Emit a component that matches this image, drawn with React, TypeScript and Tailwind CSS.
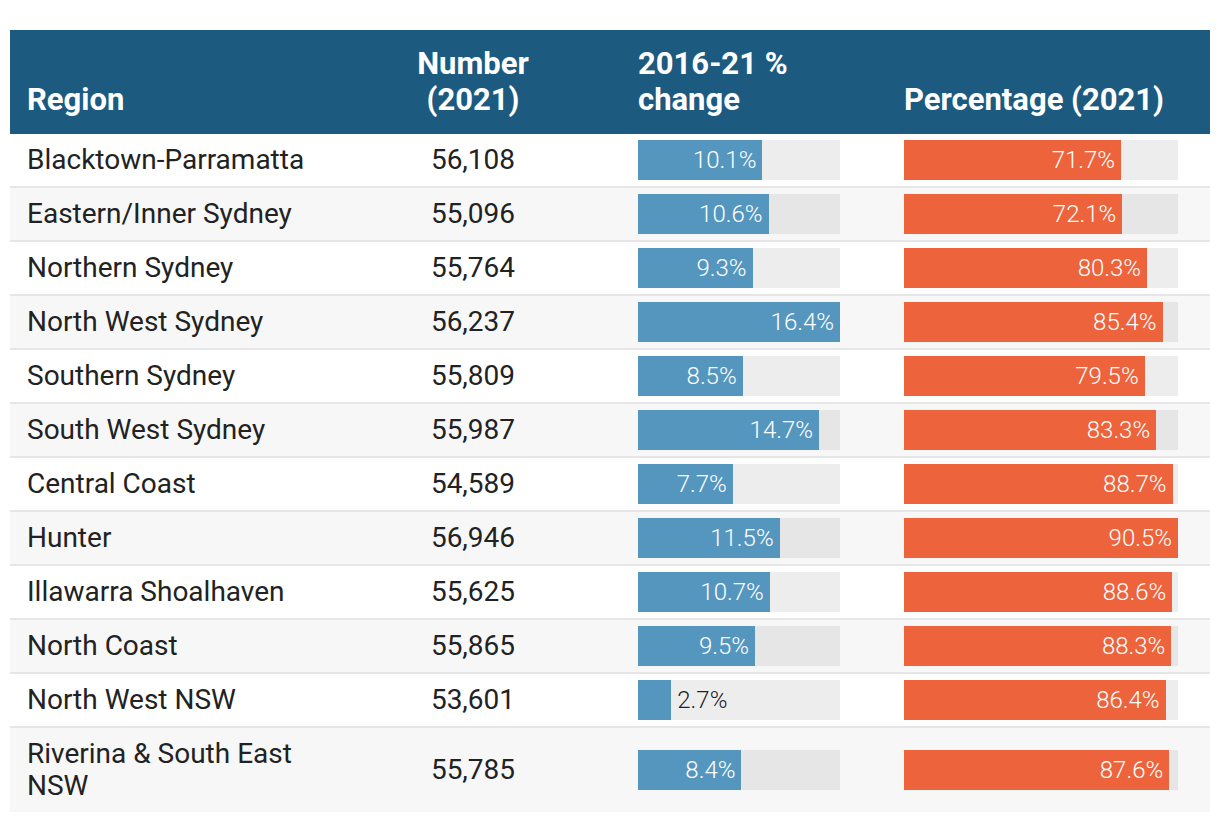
const rows = [
  { region: "Blacktown-Parramatta", num: "56,108", change: 10.1, pct: 71.7 },
  { region: "Eastern/Inner Sydney", num: "55,096", change: 10.6, pct: 72.1 },
  { region: "Northern Sydney", num: "55,764", change: 9.3, pct: 80.3 },
  { region: "North West Sydney", num: "56,237", change: 16.4, pct: 85.4 },
  { region: "Southern Sydney", num: "55,809", change: 8.5, pct: 79.5 },
  { region: "South West Sydney", num: "55,987", change: 14.7, pct: 83.3 },
  { region: "Central Coast", num: "54,589", change: 7.7, pct: 88.7 },
  { region: "Hunter", num: "56,946", change: 11.5, pct: 90.5 },
  { region: "Illawarra Shoalhaven", num: "55,625", change: 10.7, pct: 88.6 },
  { region: "North Coast", num: "55,865", change: 9.5, pct: 88.3 },
  { region: "North West NSW", num: "53,601", change: 2.7, pct: 86.4 },
  { region: "Riverina & South East NSW", num: "55,785", change: 8.4, pct: 87.6 },
]

const MAX_CHANGE = 16.4
const MAX_PCT = 90.5

function Bar({
  value,
  max,
  color,
  width,
  odd,
}: {
  value: number
  max: number
  color: string
  width: string
  odd: boolean
}) {
  const frac = value / max
  // labels only fit inside bars that are wide enough
  const inside = frac > 0.25
  return (
    <div className={`flex h-10 text-[24px] ${width} ${odd ? "bg-[#e6e6e6]" : "bg-[#ededed]"}`}>
      <div
        className={`flex h-full items-center justify-end pr-[6px] ${color}`}
        style={{ width: `${frac * 100}%` }}
      >
        {inside && <span className="font-light text-white">{value.toFixed(1)}%</span>}
      </div>
      {!inside && (
        <span className="flex items-center pl-[6px] font-light text-[#222]">{value.toFixed(1)}%</span>
      )}
    </div>
  )
}

export default function App() {
  return (
    <div className="min-h-screen bg-white pt-[30px] font-['Roboto',sans-serif]">
      <div className="mx-[10px] w-[1200px]">
        <div className="grid h-[104px] grid-cols-[400px_126px_336px_338px] items-end bg-[#1c5a80] pb-[16px] text-[31px] font-bold leading-[36px] text-white">
          <div className="pl-[17px]">Region</div>
          <div className="text-center">
            Number
            <br />
            (2021)
          </div>
          <div className="pl-[102px]">
            2016-21 %
            <br />
            change
          </div>
          <div className="pl-[32px]">Percentage (2021)</div>
        </div>
        {rows.map((r, i) => {
          const odd = i % 2 === 1
          const last = i === rows.length - 1
          return (
            <div
              key={r.region}
              className={`grid grid-cols-[400px_126px_336px_338px] items-center py-[6px] text-[28px] leading-[32px] text-[#222] ${
                odd ? "bg-[#f7f7f7]" : "bg-white"
              } ${last ? "min-h-[84px]" : "border-b-2 border-[#e6e6e6]"}`}
            >
              <div className="pl-[17px] pr-[73px]">{r.region}</div>
              <div className="text-center">{r.num}</div>
              <div className="pl-[102px]">
                <Bar value={r.change} max={MAX_CHANGE} color="bg-[#5596bf]" width="w-[202px]" odd={odd} />
              </div>
              <div className="pl-[32px]">
                <Bar value={r.pct} max={MAX_PCT} color="bg-[#ec633c]" width="w-[274px]" odd={odd} />
              </div>
            </div>
          )
        })}
      </div>
    </div>
  )
}
